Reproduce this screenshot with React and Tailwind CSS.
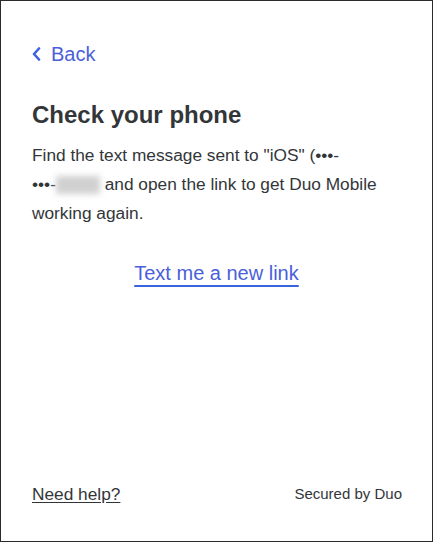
import React from 'react';

const App = () => {
  return (
    <div className="w-[433px] h-[542px] border border-[#2b2b2b] bg-white flex flex-col font-['Liberation_Sans',Arial,sans-serif] text-[#333639]">
      <div className="px-[31px] pt-[40px]">
        {/* Back link */}
        <a href="#" className="inline-flex items-center gap-[10px] text-[20px] leading-[26px] text-[#4a5fd9]">
          <svg width="9" height="14" viewBox="0 0 9 14" fill="none">
            <path d="M7 1.5 L2 7 L7 12.5" stroke="#3b63e0" strokeWidth="2.6" strokeLinecap="round" strokeLinejoin="round" />
          </svg>
          Back
        </a>

        <h1 className="mt-[32px] text-[24px] leading-[30px] font-bold text-[#333639]">Check your phone</h1>

        <p className="mt-[11px] text-[17.3px] leading-[29px]">
          Find the text message sent to "iOS" (•••-
          <br />
          •••-<span className="inline-block align-middle w-[44px] h-[18px] bg-[#d0d0d0] blur-[3px]"></span> and open the link to get Duo Mobile working again.
        </p>

        <div className="mt-[32px] flex justify-center">
          <a href="#" className="text-[20px] leading-[26px] text-[#4a5fd9] underline decoration-2 decoration-[#3b63e0] underline-offset-[5px]">
            Text me a new link
          </a>
        </div>
      </div>

      <div className="mt-auto mb-[36px] px-[31px] flex items-center justify-between">
        <a href="#" className="text-[17.3px] leading-[22px] underline underline-offset-2 text-[#333639]">Need help?</a>
        <span className="text-[15px] leading-[18px] mr-[-1px] text-[#333639]">Secured by Duo</span>
      </div>
    </div>
  );
};

export default App;
